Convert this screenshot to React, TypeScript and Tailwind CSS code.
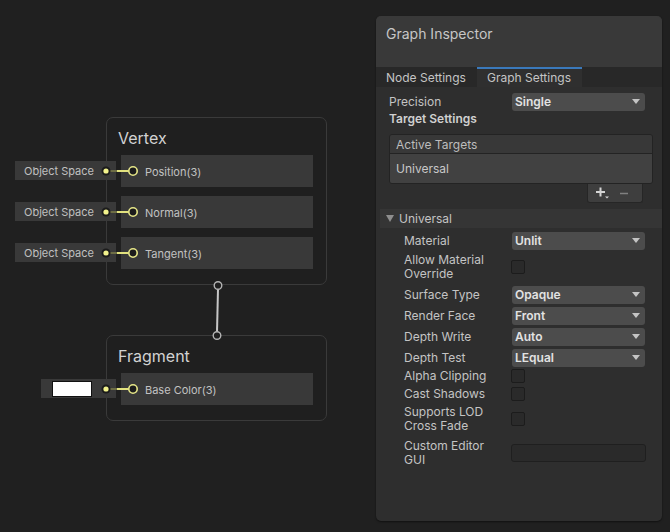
import React from "react";

function Row({ label }: { label: string }) {
  return (
    <div className="h-[32px] w-[192px] bg-[#393939] flex items-center pl-[24px] pt-[3px] text-[11px] text-[#c2c2c2]">
      {label}
    </div>
  );
}

function Canvas() {
  const ys = [171, 212, 253, 389];
  return (
    <div className="relative w-[376px] h-[532px] shrink-0">
      {/* Vertex node */}
      <div className="absolute left-[106px] top-[117px] w-[221px] h-[168px] border border-[#3a3a3a] rounded-[7px] bg-[#1f1f1f]">
        <div className="h-[37px] pl-[11px] pt-[10px] text-[16px] leading-[20px] text-[#d2d2d2]">Vertex</div>
        <div className="pl-[14px] flex flex-col gap-[9px]">
          <Row label="Position(3)" />
          <Row label="Normal(3)" />
          <Row label="Tangent(3)" />
        </div>
      </div>
      {/* Fragment node */}
      <div className="absolute left-[106px] top-[335px] w-[221px] h-[86px] border border-[#3a3a3a] rounded-[7px] bg-[#1f1f1f]">
        <div className="h-[37px] pl-[11px] pt-[10px] text-[16px] leading-[20px] text-[#d2d2d2]">Fragment</div>
        <div className="pl-[14px] flex flex-col gap-[9px]">
          <Row label="Base Color(3)" />
        </div>
      </div>
      {/* Inputs */}
      <div className="absolute left-[15px] top-[161px] w-[101px] h-[19px] bg-[#393939] pl-[9px] pt-[1px] flex items-center text-[11px] text-[#c0c0c0]">Object Space</div>
      <div className="absolute left-[15px] top-[202px] w-[101px] h-[19px] bg-[#393939] pl-[9px] pt-[1px] flex items-center text-[11px] text-[#c0c0c0]">Object Space</div>
      <div className="absolute left-[15px] top-[243px] w-[101px] h-[19px] bg-[#393939] pl-[9px] pt-[1px] flex items-center text-[11px] text-[#c0c0c0]">Object Space</div>
      <div className="absolute left-[41px] top-[379px] w-[75px] h-[19px] bg-[#393939] pl-[11px] pt-[2px]">
        <div className="w-[40px] h-[16px] bg-white border border-[#111]" />
      </div>
      <svg className="absolute left-0 top-0 pointer-events-none" width="376" height="532">
        {ys.map((y) => (
          <g key={y}>
            <line x1="108" y1={y} x2="117" y2={y} stroke="#6d6d45" strokeWidth="2" />
            <line x1="117" y1={y} x2="129" y2={y} stroke="#e2e27e" strokeWidth="2" />
            <circle cx="106" cy={y} r="4.5" fill="#1b1b1b" />
            <circle cx="106" cy={y} r="2.6" fill="#f2f28c" />
            <circle cx="133" cy={y} r="4.2" fill="#1c1c1c" stroke="#e6e688" strokeWidth="1.6" />
          </g>
        ))}
        <line x1="218" y1="289" x2="217" y2="332" stroke="#c6c6c6" strokeWidth="2" />
        <circle cx="218" cy="285.5" r="3.8" fill="#1f1f1f" stroke="#b4b4b4" strokeWidth="1.4" />
        <circle cx="217" cy="335.5" r="3.8" fill="#1f1f1f" stroke="#b4b4b4" strokeWidth="1.4" />
      </svg>
    </div>
  );
}

function Arrow() {
  return (
    <svg width="8" height="5" viewBox="0 0 8 5">
      <path d="M0 0 L8 0 L4 5 Z" fill="#c4c4c4" />
    </svg>
  );
}

function Dropdown({ value }: { value: string }) {
  return (
    <div className="w-[133px] h-[18px] bg-[#4c4c4c] rounded-[3px] flex items-center justify-between pl-[3px] pr-[5px] text-[12px] font-semibold text-[#e2e2e2]">
      <span className="pt-[1px]">{value}</span>
      <Arrow />
    </div>
  );
}

function Check() {
  return <div className="w-[14px] h-[14px] ml-[-1px] bg-[#2a2a2a] border border-[#1c1c1c] rounded-[2px]" />;
}

function Prop({ label, h, mt, children }: { label: React.ReactNode; h: string; mt: string; children: React.ReactNode }) {
  return (
    <div className={`flex items-center pl-[28px] ${h} ${mt}`}>
      <div className="w-[108px] text-[12px] leading-[14px] text-[#c4c4c4]">{label}</div>
      {children}
    </div>
  );
}

function Inspector() {
  return (
    <div className="mt-[16px] w-[286px] h-[505px] rounded-[5px] bg-[#2e2e2e] overflow-hidden flex flex-col shadow-[0_1px_2px_rgba(0,0,0,0.5)] text-[#c4c4c4]">
      <div className="h-[51px] shrink-0 bg-[#393939] pl-[10px] pt-[8px] text-[14px] leading-[20px] text-[#c6c6c6]">Graph Inspector</div>
      <div className="h-[20px] shrink-0 bg-[#282828] flex text-[12px]">
        <div className="w-[101px] pl-[10px] pt-[1px] flex items-center">Node Settings</div>
        <div className="w-[105px] pl-[10px] flex items-center bg-[#2f2f2f] border-t-2 border-[#3a79bb]">Graph Settings</div>
      </div>
      <div className="mt-[5px] h-[19px] flex items-center pl-[13px]">
        <div className="w-[123px] text-[12px]">Precision</div>
        <Dropdown value="Single" />
      </div>
      <div className="h-[16px] flex items-center pl-[13px] text-[12px] font-semibold text-[#d0d0d0]">Target Settings</div>
      <div className="mt-[7px] ml-[13px] w-[264px] border border-[#232323] rounded-[3px] overflow-hidden">
        <div className="h-[19px] bg-[#383838] pl-[6px] pt-[1px] flex items-center text-[12px] text-[#bdbdbd] border-b border-[#232323]">Active Targets</div>
        <div className="h-[29px] bg-[#414141] pl-[6px] pt-[1px] flex items-center text-[12px] text-[#c8c8c8]">Universal</div>
      </div>
      <div className="ml-[211px] w-[56px] h-[19px] bg-[#3e3e3e] rounded-b-[3px] border-x border-b border-[#262626] flex items-center">
        <svg className="ml-[8px]" width="13" height="12" viewBox="0 0 13 12">
          <path d="M4.5 0.5 V9.5 M0 5 H9" stroke="#d4d4d4" strokeWidth="2" />
          <path d="M9 9.5 L13 9.5 L11 11.5 Z" fill="#d4d4d4" />
        </svg>
        <svg className="ml-[11px]" width="8" height="3" viewBox="0 0 8 3">
          <path d="M0 1.5 H8" stroke="#808080" strokeWidth="1.6" />
        </svg>
      </div>
      <div className="mt-[6px] ml-[4px] w-[282px] h-[19px] shrink-0 bg-[#353535] flex items-center pl-[6px] text-[12px]">
        <svg width="8" height="7" viewBox="0 0 8 7">
          <path d="M0 0 L8 0 L4 7 Z" fill="#8e8e8e" />
        </svg>
        <span className="ml-[5px] pt-[1px]">Universal</span>
      </div>
      <Prop label="Material" h="h-[19px]" mt="mt-[3px]"><Dropdown value="Unlit" /></Prop>
      <Prop label={<>Allow Material<br />Override</>} h="h-[29px]" mt="mt-[2px]"><Check /></Prop>
      <Prop label="Surface Type" h="h-[19px]" mt="mt-[4px]"><Dropdown value="Opaque" /></Prop>
      <Prop label="Render Face" h="h-[19px]" mt="mt-[2px]"><Dropdown value="Front" /></Prop>
      <Prop label="Depth Write" h="h-[19px]" mt="mt-[2px]"><Dropdown value="Auto" /></Prop>
      <Prop label="Depth Test" h="h-[19px]" mt="mt-[2px]"><Dropdown value="LEqual" /></Prop>
      <Prop label="Alpha Clipping" h="h-[16px]" mt="mt-[1px]"><Check /></Prop>
      <Prop label="Cast Shadows" h="h-[16px]" mt="mt-[2px]"><Check /></Prop>
      <Prop label={<>Supports LOD<br />Cross Fade</>} h="h-[28px]" mt="mt-[3px]"><Check /></Prop>
      <Prop label={<>Custom Editor<br />GUI</>} h="h-[28px]" mt="mt-[6px]">
        <div className="w-[135px] ml-[-1px] h-[18px] bg-[#2a2a2a] border border-[#1f1f1f] rounded-[3px]" />
      </Prop>
    </div>
  );
}

export default function App() {
  return (
    <div className="w-[670px] h-[532px] bg-[#202020] flex overflow-hidden font-['Inter','Noto_Sans',sans-serif]">
      <Canvas />
      <Inspector />
    </div>
  );
}
